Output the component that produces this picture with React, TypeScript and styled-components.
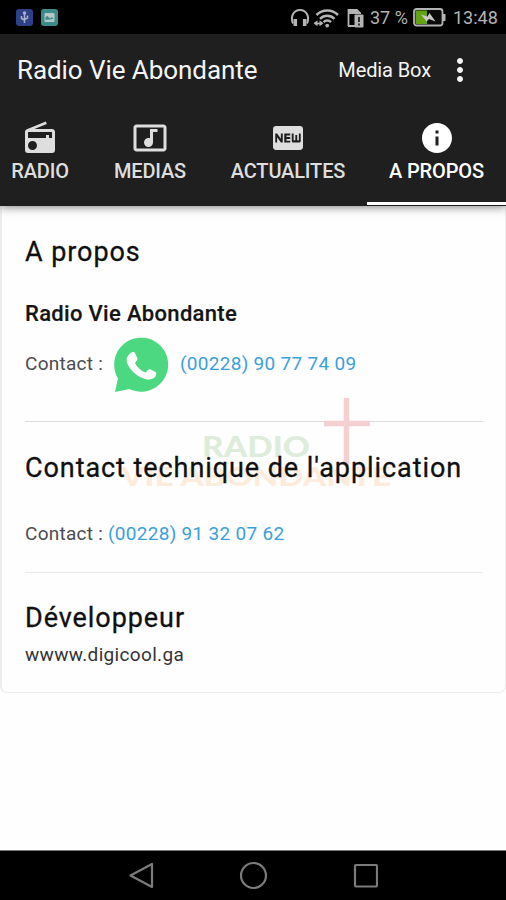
import React from "react";
import styled, { createGlobalStyle } from "styled-components";
import { MdRadio, MdMusicVideo, MdFiberNew, MdInfo, MdMoreVert } from "react-icons/md";

const GlobalStyle = createGlobalStyle`
  * { box-sizing: border-box; }
  body { margin: 0; background: #fff; font-family: Roboto, sans-serif; overflow: hidden; }
`;

const Screen = styled.div`
  width: 506px;
  height: 900px;
  display: flex;
  flex-direction: column;
  background: #fefefe;
  overflow: hidden;
`;

const StatusBar = styled.div`
  height: 34px;
  flex: none;
  display: flex;
  align-items: center;
  background: #000;
  color: #b4b4b4;
  padding: 1px 8px 0 16px;
  font-size: 18px;
`;

const AppBadge = styled.span<{ $color: string }>`
  width: 17px;
  height: 17px;
  margin-right: 8px;
  border-radius: 3px;
  background: ${(p) => p.$color};
  display: flex;
`;

const StatusIcon = styled.svg<{ $gap: number }>`
  flex: none;
  margin-right: ${(p) => p.$gap}px;
`;

const StatusText = styled.span<{ $width: number }>`
  width: ${(p) => p.$width}px;
  line-height: 34px;
  white-space: nowrap;
`;

const Spacer = styled.div`
  flex: 1;
`;

const Header = styled.header`
  flex: none;
  height: 172px;
  background: #1f1f1f;
  position: relative;
  z-index: 1;
  box-shadow: 0 1px 9px rgba(0, 0, 0, 0.5);
`;

const Toolbar = styled.div`
  height: 72px;
  display: flex;
  align-items: center;
  padding: 0 28px 0 17px;
  color: #f4f4f4;
`;

const Title = styled.h1`
  margin: 0;
  font-size: 26px;
  font-weight: 400;
  line-height: 72px;
  white-space: nowrap;
  letter-spacing: -0.07px;
`;

const MenuAction = styled.span`
  font-size: 20px;
  line-height: 70px;
  margin-right: 11px;
  letter-spacing: -0.1px;
`;

const Overflow = styled(MdMoreVert)`
  width: 36px;
  height: 36px;
  flex: none;
`;

const Tabs = styled.nav`
  display: flex;
  height: 100px;
  margin-left: -11px;
`;

const Tab = styled.div<{ $width: number; $active?: boolean }>`
  width: ${(p) => p.$width}px;
  flex: none;
  display: flex;
  flex-direction: column;
  align-items: center;
  padding-top: 14px;
  height: 99px;
  color: ${(p) => (p.$active ? "#ffffff" : "#dedede")};
  border-bottom: 3px solid ${(p) => (p.$active ? "#ffffff" : "transparent")};
  svg { width: 36px; height: 36px; flex: none; }
`;

const TabLabel = styled.span`
  margin-top: 3px;
  font-size: 20px;
  font-weight: 500;
  line-height: 25px;
  white-space: nowrap;
  letter-spacing: -0.15px;
`;

const Content = styled.main`
  flex: 1;
  display: flex;
  flex-direction: column;
`;

const Card = styled.section`
  position: relative;
  height: 487px;
  padding: 27px 22px 0 23px;
  border: 2px solid #ececec;
  border-width: 0 1px 1px 2px;
  border-radius: 0 0 7px 7px;
  display: flex;
  flex-direction: column;
`;

const Watermark = styled.svg`
  position: absolute;
  left: 110px;
  top: 186px;
`;

const Heading = styled.h2<{ $top?: number }>`
  position: relative;
  margin: ${(p) => p.$top ?? 0}px 0 0;
  font-size: 27px;
  font-weight: 400;
  line-height: 38px;
  color: #101010;
  -webkit-text-stroke: 0.3px #101010;
  white-space: nowrap;
  letter-spacing: 0.93px;
`;

const Name = styled.h3`
  margin: 28px 0 0;
  font-size: 22px;
  font-weight: 500;
  line-height: 30px;
  color: #151515;
  -webkit-text-stroke: 0.2px #151515;
  letter-spacing: 0.32px;
`;

const ContactRow = styled.div<{ $height: number; $top: number }>`
  position: relative;
  display: flex;
  align-items: center;
  height: ${(p) => p.$height}px;
  margin-top: ${(p) => p.$top}px;
  font-size: 19px;
  color: #4c4c4c;
  white-space: nowrap;
`;

const ContactLabel = styled.span<{ $width: number }>`
  width: ${(p) => p.$width}px;
  letter-spacing: 0.27px;
`;

const Phone = styled.a`
  color: #3c9fda;
  letter-spacing: 0.3px;
`;

const WhatsApp = styled.svg`
  margin: 3px 11px 0 0;
  flex: none;
`;

const Divider = styled.div<{ $top: number; $color: string }>`
  height: 1px;
  flex: none;
  margin: ${(p) => p.$top}px 0 0;
  background: ${(p) => p.$color};
`;

const Site = styled.div`
  font-size: 19px;
  line-height: 28px;
  margin-top: 4px;
  color: #333;
  letter-spacing: 0.33px;
`;

const NavBar = styled.footer`
  flex: none;
  height: 50px;
  background: #000;
  border-top: 1px solid #777;
  display: flex;
  align-items: center;
  justify-content: center;
`;

const TABS = [
  { label: "RADIO", width: 102, icon: <MdRadio /> },
  { label: "MEDIAS", width: 118, icon: <MdMusicVideo /> },
  { label: "ACTUALITES", width: 158, icon: <MdFiberNew /> },
  { label: "A PROPOS", width: 139, icon: <MdInfo />, active: true },
];

export default function App() {
  return (
    <Screen>
      <GlobalStyle />
      <StatusBar>
        <AppBadge $color="#2d4186">
          <svg width="17" height="17" viewBox="0 0 17 17" fill="none" stroke="#a9b0cc" strokeWidth="1.5">
            <path d="M8.5 4v10M5.5 7v2.5l3 1.5M11.5 6.500v2.500l-3 1.500" />
            <circle cx="8.500" cy="4" r="1" fill="#a9b0cc" />
          </svg>
        </AppBadge>
        <AppBadge $color="#3d8c8c">
          <svg width="17" height="17" viewBox="0 0 17 17">
            <rect x="3.500" y="4" width="10" height="9" rx="1" fill="#b5c9c8" />
            <path d="M4.500 11V8l2-1 2.500 2.500L11 8l1.500 2" fill="#3d8c8c" />
          </svg>
        </AppBadge>
        <Spacer />
        <StatusIcon $gap={3} width="20" height="20" viewBox="0 0 20 20" fill="none" stroke="#b4b4b4">
          <path d="M3 15.500C0 9 3.500 2 10 2s10 7 7 13.500" strokeWidth="2" />
          <path d="M5.300 11v7M14.700 11v7" strokeWidth="3.600" />
        </StatusIcon>
        <StatusIcon $gap={8} width="26" height="20" viewBox="0 0 26 20" fill="none" stroke="#b4b4b4" strokeWidth="2.500">
          <path d="M3.500 7C9.500 1 19 1 25 7M7 10.800c4-4 10.500-4 14.500 0M10.500 14.200c2.200-2.200 5.300-2.200 7.500 0" />
          <circle cx="14.200" cy="17.600" r="1.900" fill="#b4b4b4" stroke="none" />
          <path d="M2 15.500h7" strokeWidth="1.800" />
          <path d="M4.500 12.200v6L.5 15.300zM6.500 12.200v6l4-2.900z" fill="#b4b4b4" stroke="none" />
        </StatusIcon>
        <StatusIcon $gap={6} width="17" height="20" viewBox="0 0 17 20" fill="none">
          <path d="M1.500 18V2h8l3.500 3.500" stroke="#b4b4b4" strokeWidth="1.800" />
          <path d="M1 1h9l4 4v1H1zM1 17h7v2H1z" fill="#b4b4b4" />
          <rect x="7.500" y="6.500" width="9" height="13" rx="1" fill="#b4b4b4" />
          <path d="M12 9v5M12 15.500v2" stroke="#111" strokeWidth="1.600" />
        </StatusIcon>
        <StatusText $width={43}>37 %</StatusText>
        <StatusIcon $gap={7} width="33" height="19" viewBox="0 0 33 19">
          <rect x="1" y="1" width="28.500" height="16.500" rx="2.500" fill="#090909" stroke="#b4b4b4" strokeWidth="1.800" />
          <path d="M2.500 2.500H14v13.500H2.500z" fill="#62a313" />
          <path d="M30 6h2.500v7H30z" fill="#b4b4b4" />
          <path d="m8 6.500 6.500 2 2-3.500 6 8.500-6.500-2.500-2.500 2.500z" fill="#c8c8c8" />
        </StatusIcon>
        <StatusText $width={45}>13:48</StatusText>
      </StatusBar>

      <Header>
        <Toolbar>
          <Title>Radio Vie Abondante</Title>
          <Spacer />
          <MenuAction>Media Box</MenuAction>
          <Overflow />
        </Toolbar>
        <Tabs>
          {TABS.map((t) => (
            <Tab key={t.label} $width={t.width} $active={t.active}>
              {t.icon}
              <TabLabel>{t.label}</TabLabel>
            </Tab>
          ))}
        </Tabs>
      </Header>

      <Content>
        <Card>
          <Watermark width="290" height="110" viewBox="0 0 290 110">
            <path d="M234.500 6v68M212 31.500h46" stroke="#f5d0d3" strokeWidth="5.500" />
            <text x="90" y="65" fontFamily="Lato" fontWeight="900" fontSize="29" fill="#deeddb" textLength="108" lengthAdjust="spacingAndGlyphs">RADIO</text>
            <text x="9" y="93.500" fontFamily="Lato" fontWeight="900" fontSize="27" fill="#fdecdc" textLength="270" lengthAdjust="spacingAndGlyphs">VIE ABONDANTE</text>
          </Watermark>
          <Heading>A propos</Heading>
          <Name>Radio Vie Abondante</Name>
          <ContactRow $height={56} $top={6}>
            <ContactLabel $width={88}>Contact :</ContactLabel>
            <WhatsApp width="56" height="56" viewBox="0 0 56 56">
              <path d="M2 55 5 41.500A27 27 0 1 1 16.500 52z" fill="#4bd881" />
              <path d="M18.500 15.500c1.300-1.500 4-1.800 4.700-.2l2.500 5.800c.5 1.100-.2 2.300-2.600 4.900 3 5.400 6.800 8.500 11.600 10.300 2.600-3.500 3.200-4 4.600-3.500l5.800 2.800c1.500.8.700 4-1 5.700-2.400 2.400-6.100 3-10 1.800-8.500-2.300-14.500-8-18.500-15.200-2.500-4.500-1.300-9.200 2.900-12.400z" transform="translate(.2 1.500) scale(.94)" fill="#fff" />
            </WhatsApp>
            <Phone>(00228) 90 77 74 09</Phone>
          </ContactRow>
          <Divider $top={30} $color="#dcdcdc" />
          <Heading $top={27}>Contact technique de l'application</Heading>
          <ContactRow $height={30} $top={31}>
            <ContactLabel $width={83}>Contact :</ContactLabel>
            <Phone>(00228) 91 32 07 62</Phone>
          </ContactRow>
          <Divider $top={24} $color="#e8e8e8" />
          <Heading $top={26}>Développeur</Heading>
          <Site>wwww.digicool.ga</Site>
        </Card>
      </Content>

      <NavBar>
        <svg width="250" height="30" viewBox="0 0 250 30" fill="none" stroke="#7b7b7b" strokeWidth="2.200" strokeLinejoin="round">
          <path d="M24 3v23L2.500 14.500z" />
          <circle cx="125.500" cy="14.500" r="12.500" />
          <rect x="227" y="4" width="22" height="21.500" rx="1" />
        </svg>
      </NavBar>
    </Screen>
  );
}
